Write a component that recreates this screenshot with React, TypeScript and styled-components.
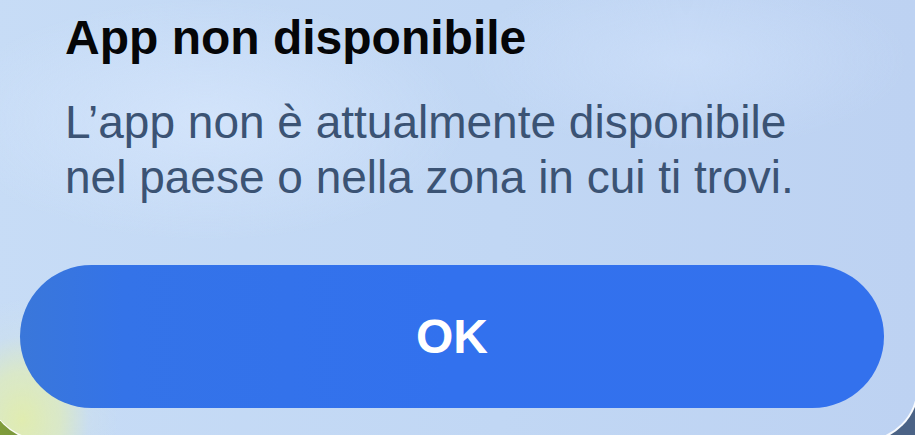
import React from 'react';
import styled, { createGlobalStyle } from 'styled-components';

const GlobalStyle = createGlobalStyle`
  html, body {
    margin: 0;
    padding: 0;
    background: #4b6386;
  }
  body {
    font-family: 'Liberation Sans', Arial, sans-serif;
    -webkit-font-smoothing: antialiased;
  }
`;

const Screen = styled.div`
  width: 915px;
  height: 435px;
  overflow: hidden;
  background: linear-gradient(90deg, #7f9c3a 0%, #6f8a4a 8%, #4b6386 40%, #4b6386 100%);
`;

const Sheet = styled.div`
  box-sizing: border-box;
  width: 933px;
  height: 442px;
  margin-left: -14px;
  padding: 10px 33px 0 34px;
  border-radius: 0 0 56px 60px;
  border-right: 2px solid rgba(255, 255, 255, 0.9);
  border-bottom: 2px solid rgba(255, 255, 255, 0.9);
  display: flex;
  flex-direction: column;
  background:
    radial-gradient(ellipse 95px 120px at 36px 420px, rgba(224, 236, 176, 1) 0, rgba(222, 235, 190, 0.8) 40%, rgba(208, 226, 230, 0.35) 70%, rgba(205, 222, 238, 0) 100%),
    radial-gradient(ellipse 260px 120px at 220px 120px, rgba(214, 230, 252, 0.8), rgba(214, 230, 252, 0)),
    radial-gradient(ellipse 220px 90px at 700px 60px, rgba(206, 224, 250, 0.7), rgba(206, 224, 250, 0)),
    linear-gradient(90deg, #c7dcf6 0%, #c1d7f4 55%, #bdd2f2 100%);
`;

const Text = styled.div`
  padding-left: 45px;
`;

const Title = styled.h1`
  margin: 0;
  font-size: 48px;
  line-height: 56px;
  font-weight: 700;
  color: #050608;
`;

const Message = styled.p`
  margin: 29px 0 0;
  max-width: 770px;
  font-size: 46px;
  line-height: 55px;
  font-weight: 400;
  color: #3b5374;
`;

const OkButton = styled.button`
  margin-top: 60px;
  height: 143px;
  border: none;
  border-radius: 72px;
  background: linear-gradient(90deg, #3a77da 0%, #3473e8 12%, #3271ee 50%, #3371ed 100%);
  color: #ffffff;
  font-family: inherit;
  font-size: 48px;
  font-weight: 700;
  cursor: pointer;
`;

export default function App() {
  return (
    <>
      <GlobalStyle />
      <Screen>
        <Sheet>
          <Text>
            <Title>App non disponibile</Title>
            <Message>
              L’app non è attualmente disponibile nel paese o nella zona in cui ti trovi.
            </Message>
          </Text>
          <OkButton>OK</OkButton>
        </Sheet>
      </Screen>
    </>
  );
}
